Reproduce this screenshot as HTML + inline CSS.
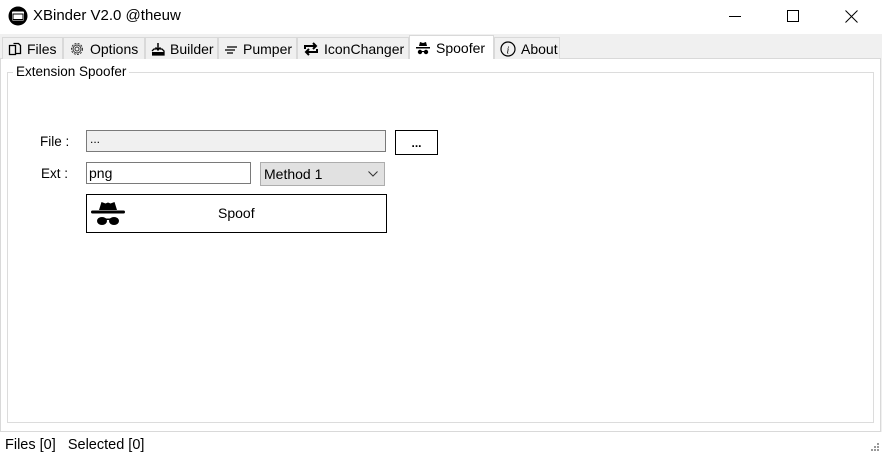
<!DOCTYPE html>
<html><head><meta charset="utf-8"><style>
*{margin:0;padding:0;box-sizing:border-box}
body{width:882px;height:456px;background:#fff;font-family:"Segoe UI","Liberation Sans",sans-serif;font-size:13.5px;color:#000;position:relative;overflow:hidden}
.a{position:absolute}
.tab{position:absolute;top:37px;height:22px;background:#f0f0f0;border:1px solid #d9d9d9;border-bottom:none;display:flex;align-items:center;padding-left:5px;font-size:14px;white-space:nowrap}
.tab svg{margin-right:5px}
</style></head><body>
<svg class="a" style="left:8px;top:6px" width="20" height="20" viewBox="0 0 20 20"><circle cx="10" cy="10" r="9.5" fill="#000"/><rect x="4" y="5.5" width="12" height="9" rx="1" fill="#fff"/><rect x="5" y="8" width="10" height="5.5" fill="#fff" stroke="#000" stroke-width="1"/></svg>
<div class="a" style="left:33px;top:7px;font-size:15px">XBinder V2.0 @theuw</div>
<div class="a" style="left:729px;top:16px;width:12px;height:1px;background:#000"></div>
<div class="a" style="left:787px;top:10px;width:12px;height:12px;border:1px solid #000"></div>
<svg class="a" style="left:845px;top:10px" width="13" height="13"><path d="M0.5 0.5L12.5 12.5M12.5 0.5L0.5 12.5" stroke="#000" stroke-width="1"/></svg>
<div class="a" style="left:0;top:34px;width:882px;height:398px;background:#f0f0f0"></div>
<div class="a" style="left:0;top:58px;width:881px;height:374px;background:#fff;border:1px solid #d9d9d9"></div>
<div class="tab" style="left:2px;width:61px"><svg width="14" height="14" viewBox="0 0 14 14"><path d="M1.5 3.5h6v9h-6z M5.5 1.5h5l2 2v8h-5" fill="none" stroke="#000" stroke-width="1.3"/></svg>Files</div>
<div class="tab" style="left:63px;width:82px"><svg width="16" height="16" viewBox="0 0 16 16"><circle cx="8" cy="8" r="5.5" fill="none" stroke="#333" stroke-width="1" stroke-dasharray="2 1.3"/><circle cx="8" cy="8" r="4" fill="none" stroke="#333"/><circle cx="8" cy="8" r="2" fill="none" stroke="#333"/></svg>Options</div>
<div class="tab" style="left:145px;width:73px"><svg width="14" height="14" viewBox="0 0 14 14"><path d="M1 13h12v-4l-2-2h-2 M5 7H3L1 9" fill="none" stroke="#000" stroke-width="1.3"/><path d="M7 1v7M4.5 5.5L7 8l2.5-2.5" fill="none" stroke="#000" stroke-width="1.5"/><rect x="1" y="10" width="12" height="3" fill="#000"/></svg>Builder</div>
<div class="tab" style="left:218px;width:79px"><svg width="14" height="14" viewBox="0 0 14 14"><path d="M3 5h10M1 8h10M3 11h6" stroke="#000" stroke-width="1.3"/></svg>Pumper</div>
<div class="tab" style="left:297px;width:112px"><svg width="16" height="14" viewBox="0 0 16 14"><path d="M2 7V4h11M10 1l3 3-3 3M14 7v3H3M6 13l-3-3 3-3" fill="none" stroke="#000" stroke-width="2"/></svg>IconChanger</div>
<div class="tab" style="left:409px;top:35px;width:85px;height:24px;background:#fff"><svg width="16" height="14" viewBox="0 0 16 14"><path d="M4 5l1-4 3 1 3-1 1 4z" fill="#000"/><rect x="1" y="6" width="14" height="1.5" fill="#000"/><circle cx="5" cy="11" r="2.2" fill="#000"/><circle cx="11" cy="11" r="2.2" fill="#000"/><rect x="5" y="10" width="6" height="1" fill="#000"/></svg>Spoofer</div>
<div class="tab" style="left:494px;width:66px"><svg width="16" height="16" viewBox="0 0 16 16"><circle cx="8" cy="8" r="7" fill="none" stroke="#000" stroke-width="1.2"/><text x="6.5" y="12.5" font-size="10" font-style="italic" font-family="Liberation Serif,serif">i</text></svg>About</div>
<div class="a" style="left:7px;top:72px;width:867px;height:351px;border:1px solid #dcdcdc"></div>
<div class="a" style="left:13px;top:64px;background:#fff;padding:0 3px;font-size:13.5px">Extension Spoofer</div>
<div class="a" style="left:40px;top:134px">File :</div>
<div class="a" style="left:86px;top:130px;width:300px;height:22px;background:#f0f0f0;border:1px solid #7a7a7a;padding:1px 3px;font-size:12px">...</div>
<div class="a" style="left:395px;top:130px;width:43px;height:25px;border:1px solid #000;text-align:center;line-height:24px;font-weight:bold;font-size:12px">...</div>
<div class="a" style="left:41px;top:166px">Ext :</div>
<div class="a" style="left:86px;top:162px;width:165px;height:22px;border:1px solid #7a7a7a;padding:2px 2px;font-size:14px">png</div>
<div class="a" style="left:260px;top:162px;width:125px;height:24px;background:#e1e1e1;border:1px solid #adadad;padding:3px 3px;font-size:14px">Method 1</div>
<svg class="a" style="left:368px;top:171px" width="10" height="6"><path d="M0.5 0.5L5 5L9.5 0.5" fill="none" stroke="#333"/></svg>
<div class="a" style="left:86px;top:194px;width:301px;height:39px;border:1px solid #000"></div>
<svg class="a" style="left:91px;top:200px" width="34" height="26" viewBox="0 0 34 26"><path d="M8 10l2.5-8 4 1.5 2.5-1 2.5 1 4-1.5 2.5 8z" fill="#000"/><rect x="0" y="10.5" width="34" height="3" rx="1.5" fill="#000"/><ellipse cx="11" cy="21" rx="5" ry="4" fill="#000"/><ellipse cx="23" cy="21" rx="5" ry="4" fill="#000"/><rect x="12" y="18.5" width="10" height="1.5" fill="#000"/></svg>
<div class="a" style="left:218px;top:205px;font-size:14px">Spoof</div>
<div class="a" style="left:5px;top:437px;font-size:14.5px">Files [0]&nbsp;&nbsp;&nbsp;Selected [0]</div>
<svg class="a" style="left:868px;top:442px" width="12" height="12"><g fill="#999"><rect x="9" y="1" width="2" height="2"/><rect x="6" y="4" width="2" height="2"/><rect x="9" y="4" width="2" height="2"/><rect x="3" y="7" width="2" height="2"/><rect x="6" y="7" width="2" height="2"/><rect x="9" y="7" width="2" height="2"/></g></svg>
</body></html>
